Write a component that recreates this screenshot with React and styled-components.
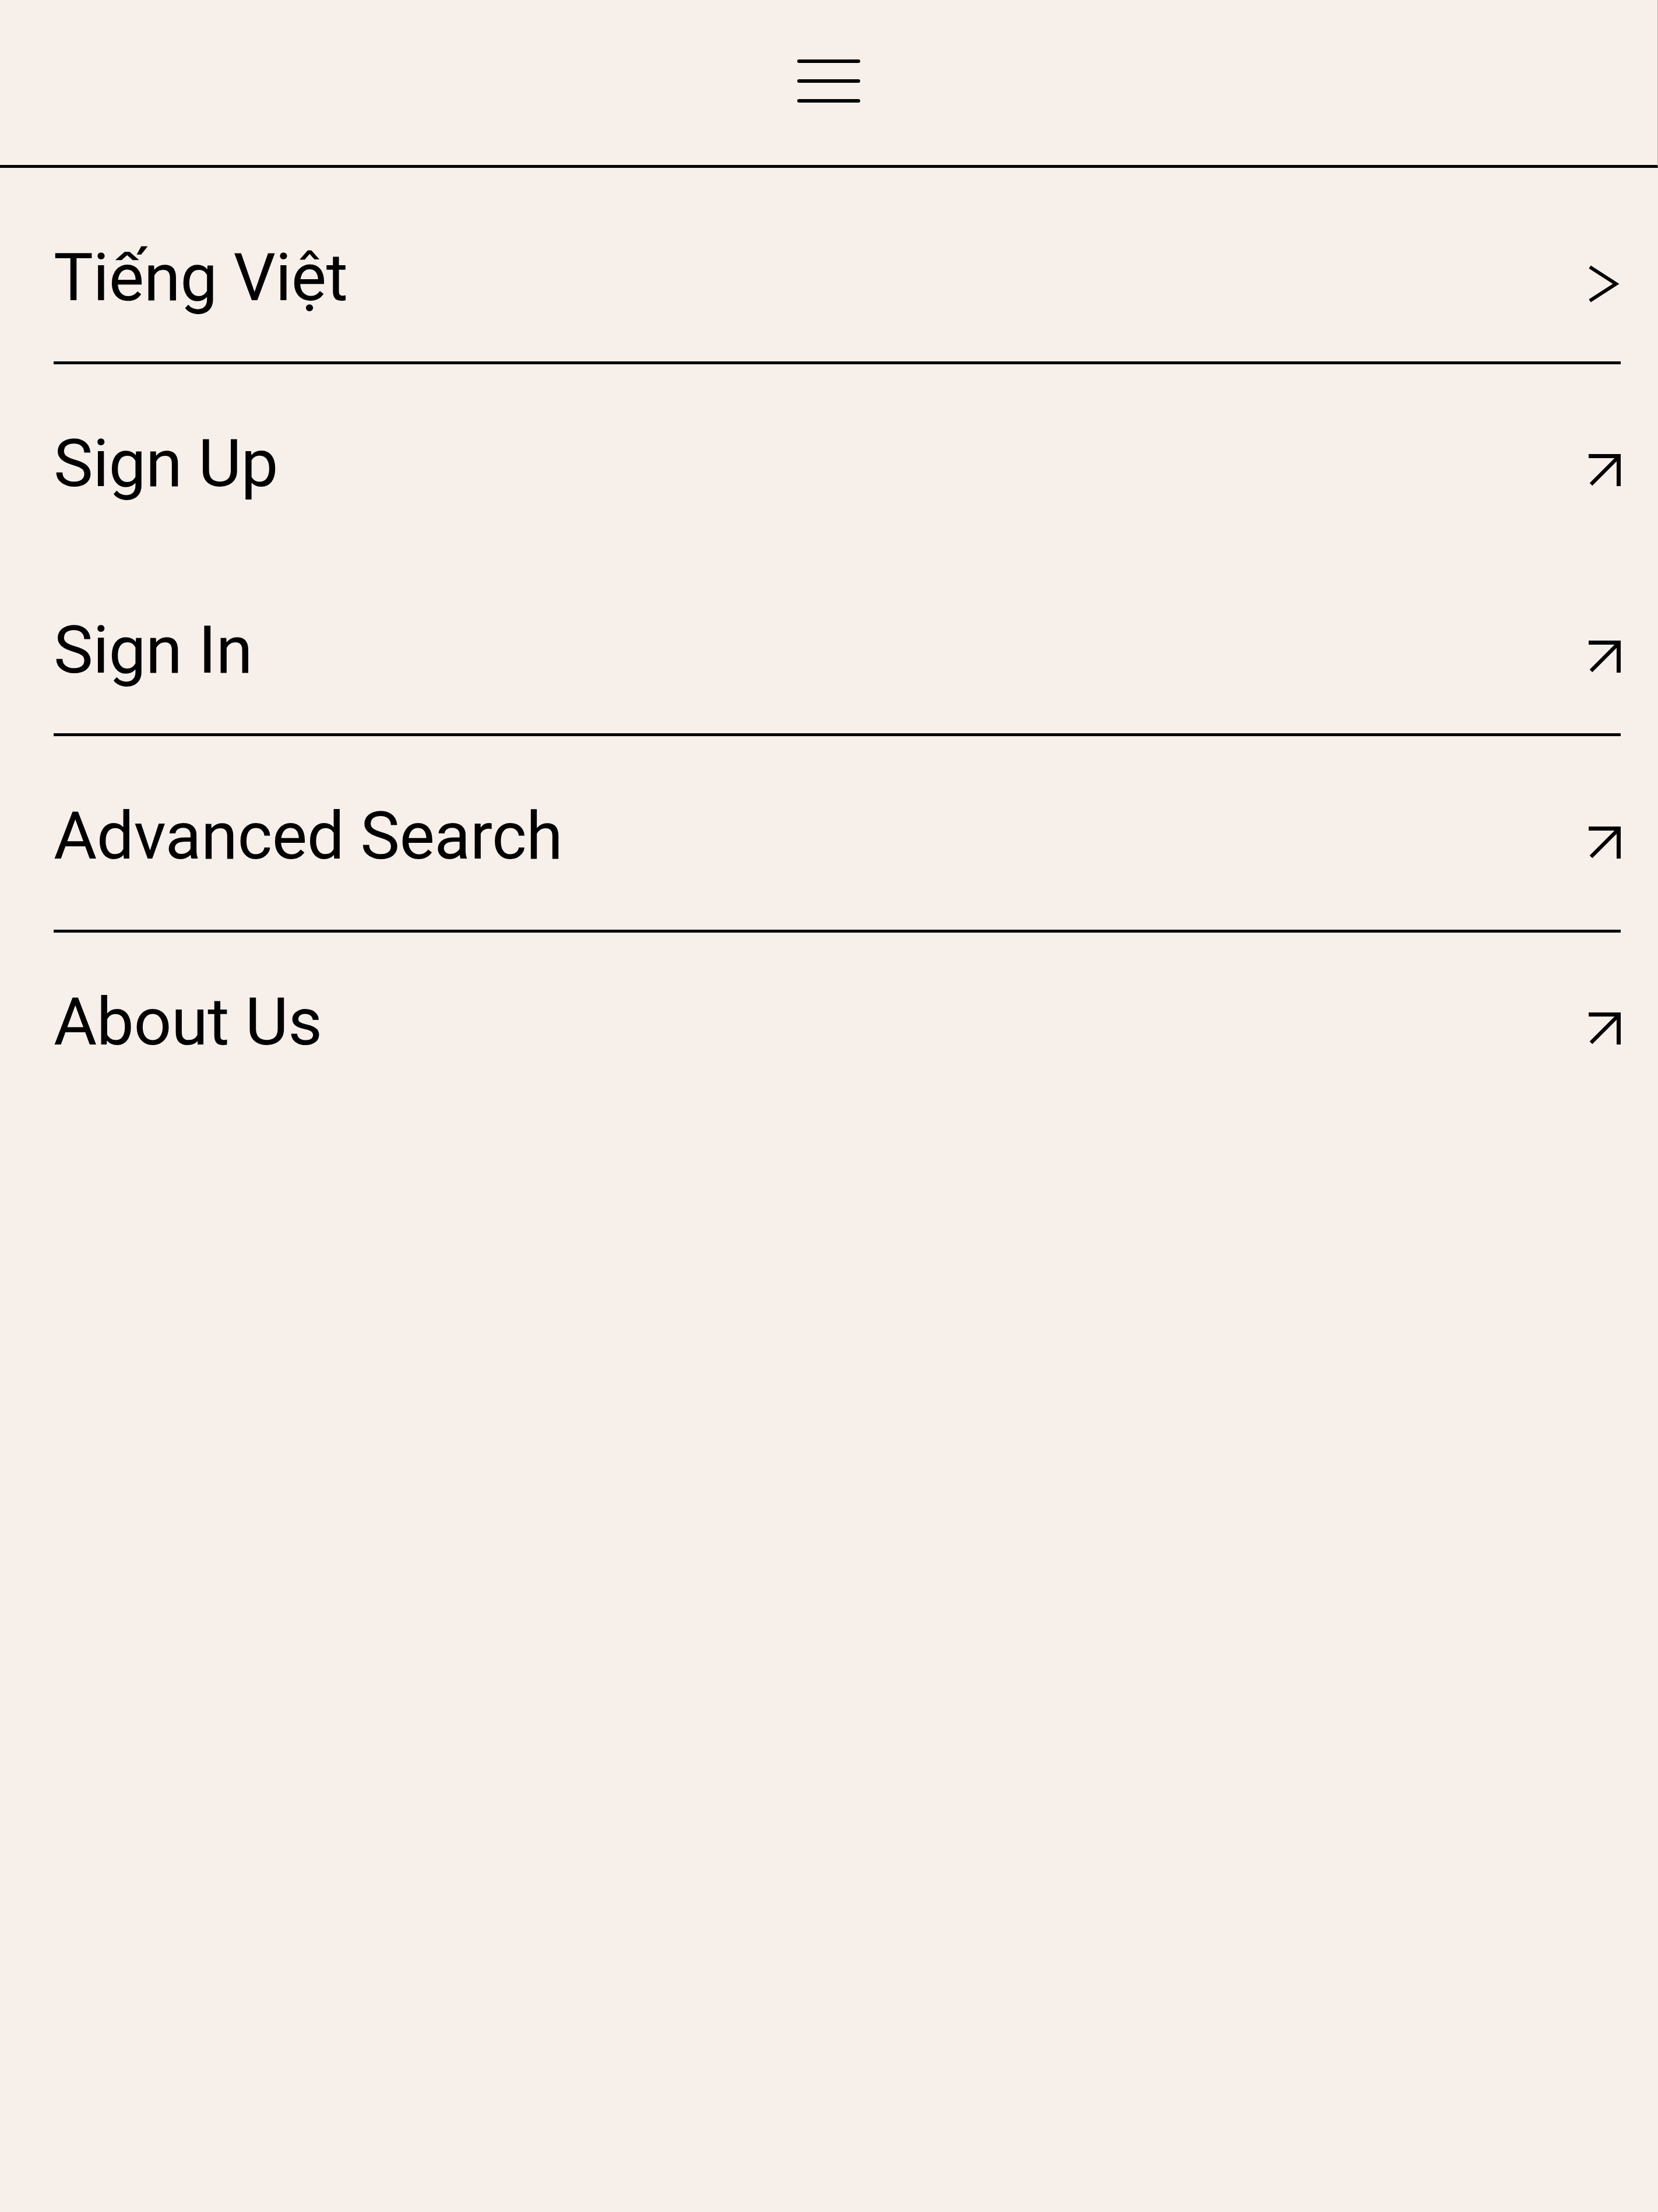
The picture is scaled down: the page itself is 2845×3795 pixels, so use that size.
import React from 'react';
import styled, { createGlobalStyle } from 'styled-components';

const GlobalStyle = createGlobalStyle`
  html, body {
    margin: 0;
    padding: 0;
    background: #f7efea;
  }
  #root {
    min-height: 3795px;
    background: #f7efea;
  }
`;

const Page = styled.div`
  font-family: Roboto, "Liberation Sans", "Noto Sans", sans-serif;
  color: #000;
  background: #f7efea;
  min-height: 3795px;
`;

const Header = styled.header`
  height: 283px;
  box-sizing: content-box;
  display: flex;
  justify-content: center;
  align-items: flex-start;
  border-bottom: 5px solid #000;
  border-right: 1px solid #b9b0ac;
`;

const MenuButton = styled.button`
  margin-top: 102px;
  width: 108px;
  padding: 0;
  border: 0;
  background: none;
  display: flex;
  flex-direction: column;
  gap: 28px;
  cursor: pointer;
`;

const Bar = styled.span`
  display: block;
  height: 6px;
  width: 100%;
  border-radius: 3px;
  background: #000;
`;

const Menu = styled.nav`
  display: flex;
  flex-direction: column;
  padding: 0 64px 0 92px;
`;

const Row = styled.a`
  display: flex;
  align-items: center;
  justify-content: space-between;
  padding-top: ${(p) => p.$pt}px;
  padding-bottom: ${(p) => p.$pb}px;
  border-bottom: 5px solid ${(p) => (p.$divider ? '#000' : 'transparent')};
  margin-bottom: ${(p) => (p.$divider ? 0 : -5)}px;
  color: inherit;
  text-decoration: none;
`;

const Label = styled.span`
  font-size: 114px;
  line-height: 114px;
  font-weight: 400;
  letter-spacing: -0.5px;
  white-space: nowrap;
`;

const IconBox = styled.span`
  display: flex;
  margin-top: 22px;
`;

const Chevron = () => (
  <svg width="56" height="64" viewBox="0 0 56 64" fill="none">
    <path d="M3 3 L48 32 L3 61" stroke="#000" strokeWidth="6" strokeLinejoin="miter" strokeLinecap="butt" />
  </svg>
);

const ArrowUpRight = () => (
  <svg width="55" height="55" viewBox="0 0 55 55" fill="none">
    <path d="M0 3.5 H51.5 V55" stroke="#000" strokeWidth="7" strokeLinejoin="miter" />
    <path d="M4 52 L50 6" stroke="#000" strokeWidth="6.5" />
  </svg>
);

const items = [
  { label: 'Tiếng Việt', icon: 'chevron', pt: 131, pb: 87, divider: true },
  { label: 'Sign Up', icon: 'arrow', pt: 113, pb: 88, divider: false },
  { label: 'Sign In', icon: 'arrow', pt: 118, pb: 86, divider: true },
  { label: 'Advanced Search', icon: 'arrow', pt: 114, pb: 104, divider: true },
  { label: 'About Us', icon: 'arrow', pt: 96, pb: 96, divider: false },
];

export default function App() {
  return (
    <Page>
      <GlobalStyle />
      <Header>
        <MenuButton aria-label="Menu">
          <Bar />
          <Bar />
          <Bar />
        </MenuButton>
      </Header>
      <Menu>
        {items.map((it) => (
          <Row key={it.label} href="#" $pt={it.pt} $pb={it.pb} $divider={it.divider}>
            <Label>{it.label}</Label>
            <IconBox>{it.icon === 'chevron' ? <Chevron /> : <ArrowUpRight />}</IconBox>
          </Row>
        ))}
      </Menu>
    </Page>
  );
}
